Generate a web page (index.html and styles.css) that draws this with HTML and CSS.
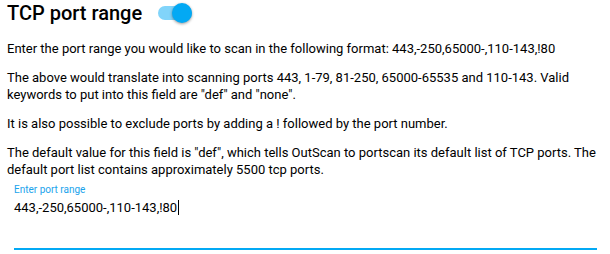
FILE: index.html
```html
<!DOCTYPE html>
<html>
<head>
<meta charset="utf-8">
<link rel="stylesheet" href="styles.css">
</head>
<body>
<div class="panel">
  <div class="header">
    <h2 class="title">TCP port range</h2>
    <span class="toggle" aria-hidden="true"><span class="track"></span><span class="thumb"></span></span>
  </div>
  <p class="desc">Enter the port range you would like to scan in the following format: 443,-250,65000-,110-143,!80</p>
  <p class="desc">The above would translate into scanning ports 443, 1-79, 81-250, 65000-65535 and 110-143. Valid keywords to put into this field are "def" and "none".</p>
  <p class="desc">It is also possible to exclude ports by adding a ! followed by the port number.</p>
  <p class="desc">The default value for this field is "def", which tells OutScan to portscan its default list of TCP ports. The default port list contains approximately 5500 tcp ports.</p>
  <div class="field">
    <label class="field-label">Enter port range</label>
    <div class="field-value">443,-250,65000-,110-143,!80<span class="caret"></span></div>
    <div class="field-line"></div>
  </div>
</div>
</body>
</html>
```
FILE: styles.css
```css
html, body {
  margin: 0;
  padding: 0;
  background: #ffffff;
}
body {
  font-family: Roboto, "Liberation Sans", sans-serif;
  color: #000000;
}
.panel {
  padding: 0 6px 0 7px;
}
.header {
  display: flex;
  align-items: center;
  gap: 16px;
  height: 26px;
}
.title {
  margin: 0;
  font-size: 20px;
  font-weight: 500;
  line-height: 26px;
}
.toggle {
  position: relative;
  width: 34px;
  height: 20px;
  display: inline-block;
}
.track {
  position: absolute;
  left: 0;
  top: 3px;
  width: 34px;
  height: 14px;
  border-radius: 7px;
  background: #81d4fa;
}
.thumb {
  position: absolute;
  right: 0;
  top: 0;
  width: 20px;
  height: 20px;
  border-radius: 50%;
  background: #03a9f4;
  box-shadow: 0 1px 3px rgba(0,0,0,0.4);
}
.desc {
  margin: 12px 0 0;
  font-size: 13px;
  line-height: 17px;
}
.header + .desc {
  margin-top: 14px;
}
.field {
  margin: 6px 7px 0;
}
.field-label {
  display: block;
  font-size: 10px;
  line-height: 12px;
  color: #1aa3ec;
}
.field-value {
  font-size: 13px;
  line-height: 17px;
  margin-top: 3px;
  display: flex;
  align-items: center;
}
.caret {
  display: inline-block;
  width: 1px;
  height: 15px;
  background: #000;
  margin-left: 1px;
}
.field-line {
  margin-top: 32px;
  height: 2px;
  background: #03a9f4;
}
```
